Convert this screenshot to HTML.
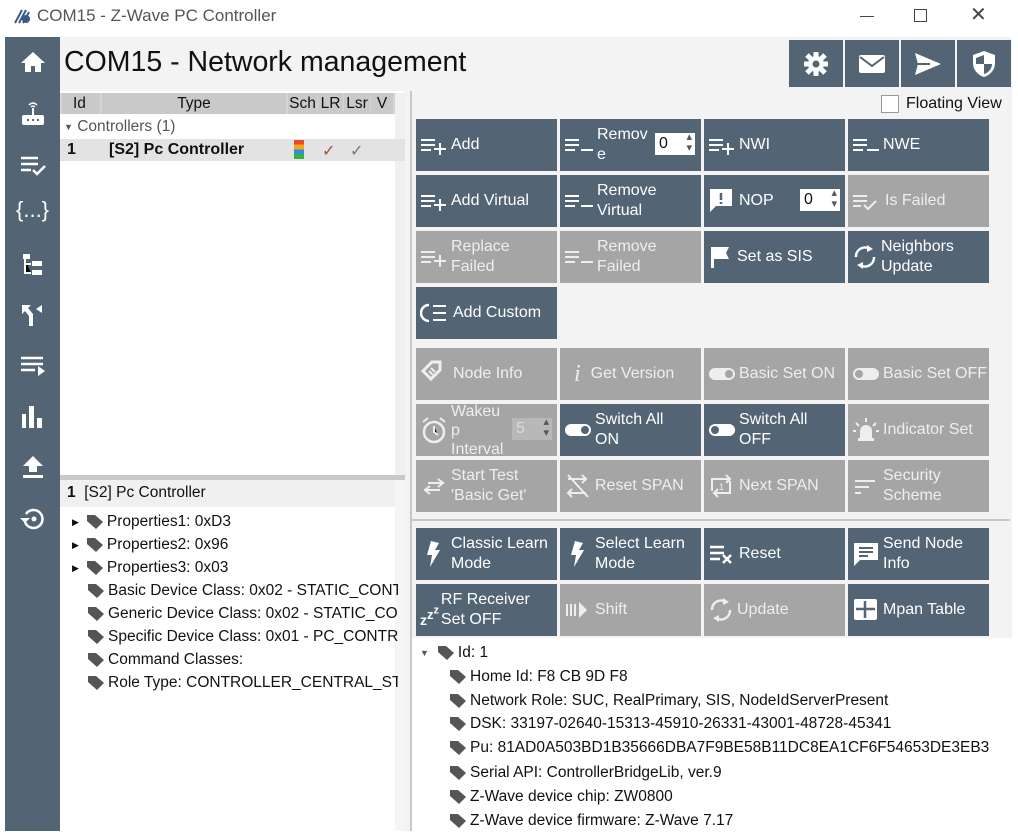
<!DOCTYPE html>
<html><head><meta charset="utf-8"><style>
*{margin:0;padding:0;box-sizing:border-box}
body{width:1018px;height:840px;background:#fff;font-family:"Liberation Sans",Arial,sans-serif;position:relative;overflow:hidden;color:#111}
.a{position:absolute}
.side{left:5px;top:37px;width:55px;height:794px;background:#536475}
.side svg{position:absolute;left:15px}
.main{left:60px;top:37px;width:952px;height:794px;background:#f3f3f3}
.btn{position:absolute;width:141px;height:52px;background:#536475;color:#fff;font-size:16px;display:flex;align-items:center;padding-left:4px;line-height:20px}
.btn.d{background:#a5a5a5;color:#eee}
.btn svg{flex:none;margin-right:3px}
.tb{position:absolute;top:40px;width:54px;height:47px;background:#536475}
.tb svg{position:absolute;left:13px;top:10px}
.spin{position:absolute;width:40px;height:22px;background:#fff;color:#111;font-size:16px;padding-left:4px;line-height:22px}
.spin:after{content:"▴\A▾";white-space:pre;position:absolute;right:3px;top:-1px;font-size:11px;line-height:11px;color:#555}
.tr{position:absolute;font-size:15.5px;white-space:nowrap;display:flex;align-items:center}
.tag{display:inline-block;width:16px;height:14px;margin-right:4px}
</style></head><body>
<svg class="a" style="left:14px;top:8px" width="18" height="16"><path d="M1 15 L8 2 M5 15 L12 2 M9 15 L15 4" stroke="#3a5a8a" stroke-width="2"/><circle cx="12" cy="11" r="4" fill="#3a5a8a"/></svg>
<div class="a" style="left:37px;top:6px;font-size:17px;color:#555">COM15 - Z-Wave PC Controller</div>
<div class="a" style="left:860px;top:16px;width:14px;height:1px;background:#444"></div>
<div class="a" style="left:914px;top:9px;width:13px;height:13px;border:1px solid #444"></div>
<div class="a" style="left:970px;top:2px;font-size:20px;color:#444;font-weight:300">✕</div>

<div class="a side">
<svg style="top:14px" width="26" height="22"><path d="M13 1 L1 12 H5 V21 H11 V15 H15 V21 H21 V12 H25Z" fill="#fff"/></svg>
<svg style="top:62px" width="26" height="28"><path d="M9 6 Q13 2 17 6 M11 8 Q13 6 15 8" stroke="#fff" stroke-width="1.5" fill="none"/><rect x="12" y="9" width="2" height="8" fill="#fff"/><rect x="2" y="16" width="22" height="10" rx="2" fill="#fff"/><path d="M7 21h2M12 21h2M17 21h2" stroke="#536475" stroke-width="2"/></svg>
<svg style="top:117px" width="26" height="22"><path d="M1 4h17M1 10h17M1 16h10" stroke="#fff" stroke-width="2.5"/><path d="M13 16l4 4 8-8" stroke="#fff" stroke-width="2.5" fill="none"/></svg>
<div class="a" style="left:11px;top:160px;color:#fff;font-size:22px">{...}</div>
<svg style="top:216px" width="26" height="24"><rect x="3" y="1" width="7" height="5" fill="#fff"/><path d="M5 6v14h6M5 11h6" stroke="#fff" stroke-width="2"/><rect x="12" y="8" width="10" height="5" fill="#fff"/><rect x="12" y="17" width="10" height="5" fill="#fff"/></svg>
<svg style="top:266px" width="26" height="24"><path d="M2 2h9l-3 3 5 6v12h-4V13L5 8 2 11Z" fill="#fff"/><path d="M16 6l6-4v8z" fill="#fff"/></svg>
<svg style="top:318px" width="26" height="22"><path d="M1 3h22M1 9h22M1 15h14" stroke="#fff" stroke-width="2.5"/><path d="M18 11l7 5-7 5z" fill="#fff"/></svg>
<svg style="top:368px" width="26" height="24"><rect x="2" y="9" width="4" height="14" fill="#fff"/><rect x="9" y="1" width="5" height="22" fill="#fff"/><rect x="17" y="13" width="5" height="10" fill="#fff"/></svg>
<svg style="top:418px" width="26" height="24"><path d="M13 1 L3 11 H9 V17 H17 V11 H23Z" fill="#fff"/><rect x="3" y="20" width="20" height="3" fill="#fff"/></svg>
<svg style="top:469px" width="26" height="26"><path d="M6 8 A9 9 0 1 1 5 16" stroke="#fff" stroke-width="2.5" fill="none"/><path d="M0 12h10L5 17z" fill="#fff"/><circle cx="14" cy="13" r="2.5" fill="#fff"/></svg>
</div>

<div class="a main"></div>
<div class="a" style="left:64px;top:46px;font-size:28.5px;color:#111">COM15 - Network management</div>

<div class="tb" style="left:789px"><svg width="28" height="28"><circle cx="14" cy="14" r="8" fill="#fff"/><path d="M14 2v24M2 14h24M5 5l18 18M23 5L5 23" stroke="#fff" stroke-width="5"/><circle cx="14" cy="14" r="3.5" fill="#536475"/></svg></div>
<div class="tb" style="left:845px"><svg width="28" height="28"><rect x="1" y="5" width="26" height="18" rx="2" fill="#fff"/><path d="M2 7l12 9 12-9" stroke="#536475" stroke-width="2" fill="none"/></svg></div>
<div class="tb" style="left:901px"><svg width="28" height="28"><path d="M1 3l26 11L1 25l3-11z" fill="#fff"/><path d="M4 14h12" stroke="#536475" stroke-width="2"/></svg></div>
<div class="tb" style="left:957px"><svg width="28" height="28"><path d="M14 1l11 4v8c0 7-5 12-11 14C8 25 3 20 3 13V5z" fill="#fff"/><path d="M14 5v9h8c0 5-4 9-8 10zM14 14H6V8l8-3z" fill="#536475"/></svg></div>

<div class="a" style="left:60px;top:91px;width:345px;height:386px;background:#fff"></div>
<div class="a" style="left:60px;top:93px;width:335px;height:21px;background:#d4d4d4"></div>
<div class="a" style="left:395px;top:93px;width:10px;height:384px;background:#f0f0f0"></div>
<div class="a" style="left:62px;top:93px;width:38px;height:21px;background:#c9c9c9;font-size:15.5px;padding-left:11px;line-height:22px">Id</div>
<div class="a" style="left:102px;top:93px;width:184px;height:21px;background:#c9c9c9;font-size:15.5px;text-align:center;line-height:22px">Type</div>
<div class="a" style="left:288px;top:93px;width:29px;height:21px;background:#c9c9c9;font-size:15.5px;text-align:center;line-height:22px">Sch</div>
<div class="a" style="left:318px;top:93px;width:25px;height:21px;background:#c9c9c9;font-size:15.5px;text-align:center;line-height:22px">LR</div>
<div class="a" style="left:344px;top:93px;width:26px;height:21px;background:#c9c9c9;font-size:15.5px;text-align:center;line-height:22px">Lsr</div>
<div class="a" style="left:371px;top:93px;width:22px;height:21px;background:#c9c9c9;font-size:15.5px;text-align:center;line-height:22px">V</div>
<div class="a" style="left:64px;top:118px;font-size:15.5px;color:#555"><span style="font-size:9px;vertical-align:middle">▼</span> Controllers (1)</div>
<div class="a" style="left:60px;top:139px;width:345px;height:22px;background:#e3e3e3"></div>
<div class="a" style="left:67px;top:141px;font-size:16px;font-weight:bold">1</div>
<div class="a" style="left:109px;top:141px;font-size:16px;font-weight:bold">[S2] Pc Controller</div>
<div class="a" style="left:294px;top:140px;width:10px;height:19px;background:linear-gradient(#e84a2c 0 25%,#f2a81c 25% 50%,#2f8ee0 50% 75%,#37b046 75%)"></div>
<div class="a" style="left:322px;top:141px;color:#a0522d;font-size:16px">✓</div>
<div class="a" style="left:350px;top:141px;color:#777;font-size:16px">✓</div>

<div class="a" style="left:60px;top:475px;width:345px;height:5px;background:#c8c8c8"></div>
<div class="a" style="left:60px;top:480px;width:345px;height:351px;background:#fff"></div>
<div class="a" style="left:60px;top:480px;width:345px;height:27px;background:#f0f0f0"></div>
<div class="a" style="left:67px;top:484px;font-size:15.5px"><b>1</b>&nbsp; [S2] Pc Controller</div>
<div class="a" style="left:395px;top:480px;width:10px;height:351px;background:#f5f5f5"></div>
<div class="a" style="left:60px;top:513px;width:338px;height:190px;overflow:hidden">
<div class="tr" style="left:12px;top:0"><span style="font-size:9px;margin-right:8px">▶</span><svg class="tag" viewBox="0 0 16 14"><path d="M0 0h8l8 7-7 7-9-8z" fill="#555"/></svg>Properties1: 0xD3</div>
<div class="tr" style="left:12px;top:23px"><span style="font-size:9px;margin-right:8px">▶</span><svg class="tag" viewBox="0 0 16 14"><path d="M0 0h8l8 7-7 7-9-8z" fill="#555"/></svg>Properties2: 0x96</div>
<div class="tr" style="left:12px;top:46px"><span style="font-size:9px;margin-right:8px">▶</span><svg class="tag" viewBox="0 0 16 14"><path d="M0 0h8l8 7-7 7-9-8z" fill="#555"/></svg>Properties3: 0x03</div>
<div class="tr" style="left:28px;top:69px"><svg class="tag" viewBox="0 0 16 14"><path d="M0 0h8l8 7-7 7-9-8z" fill="#555"/></svg>Basic Device Class: 0x02 - STATIC_CONTROLLER</div>
<div class="tr" style="left:28px;top:92px"><svg class="tag" viewBox="0 0 16 14"><path d="M0 0h8l8 7-7 7-9-8z" fill="#555"/></svg>Generic Device Class: 0x02 - STATIC_CONTROLLER</div>
<div class="tr" style="left:28px;top:115px"><svg class="tag" viewBox="0 0 16 14"><path d="M0 0h8l8 7-7 7-9-8z" fill="#555"/></svg>Specific Device Class: 0x01 - PC_CONTROLLER</div>
<div class="tr" style="left:28px;top:138px"><svg class="tag" viewBox="0 0 16 14"><path d="M0 0h8l8 7-7 7-9-8z" fill="#555"/></svg>Command Classes:</div>
<div class="tr" style="left:28px;top:161px"><svg class="tag" viewBox="0 0 16 14"><path d="M0 0h8l8 7-7 7-9-8z" fill="#555"/></svg>Role Type: CONTROLLER_CENTRAL_STATIC</div>
</div>

<div class="a" style="left:410px;top:91px;width:2px;height:740px;background:#c8c8c8"></div>

<div class="a" style="left:881px;top:95px;width:18px;height:18px;border:1px solid #999;background:#fff"></div>
<div class="a" style="left:906px;top:95px;font-size:16px">Floating View</div>

<div class="btn" style="left:416px;top:119px"><svg width="28" height="20"><path d="M1 5h14M1 10h14M1 15h10" stroke="#fff" stroke-width="2"/><path d="M20 8v12M14 14h12" stroke="#fff" stroke-width="2"/></svg>Add</div>
<div class="btn" style="left:560px;top:119px"><svg width="30" height="20"><path d="M1 5h14M1 10h14M1 15h10M17 15h12" stroke="#fff" stroke-width="2"/></svg><span>Remov<br>e</span></div>
<div class="spin" style="left:655px;top:133px">0</div>
<div class="btn" style="left:704px;top:119px"><svg width="28" height="20"><path d="M1 5h14M1 10h14M1 15h10" stroke="#fff" stroke-width="2"/><path d="M20 8v12M14 14h12" stroke="#fff" stroke-width="2"/></svg>NWI</div>
<div class="btn" style="left:848px;top:119px"><svg width="28" height="20"><path d="M1 5h14M1 10h14M1 15h10M15 15h12" stroke="#fff" stroke-width="2"/></svg>NWE</div>

<div class="btn" style="left:416px;top:175px"><svg width="28" height="20"><path d="M1 5h14M1 10h14M1 15h10" stroke="#fff" stroke-width="2"/><path d="M20 8v12M14 14h12" stroke="#fff" stroke-width="2"/></svg>Add Virtual</div>
<div class="btn" style="left:560px;top:175px"><svg width="30" height="20"><path d="M1 5h14M1 10h14M1 15h10M17 15h12" stroke="#fff" stroke-width="2"/></svg><span>Remove<br>Virtual</span></div>
<div class="btn" style="left:704px;top:175px"><svg width="28" height="28"><path d="M2 2h22v17H8l-6 6z" fill="#fff"/><path d="M13 6v7M13 15v2" stroke="#536475" stroke-width="2.5"/></svg>NOP</div>
<div class="spin" style="left:800px;top:189px">0</div>
<div class="btn d" style="left:848px;top:175px"><svg width="30" height="20"><path d="M1 5h14M1 10h14M1 15h8" stroke="#eee" stroke-width="2"/><path d="M12 14l4 4 8-8" stroke="#eee" stroke-width="2" fill="none"/></svg>Is Failed</div>

<div class="btn d" style="left:416px;top:231px"><svg width="28" height="20"><path d="M1 5h14M1 10h14M1 15h10" stroke="#eee" stroke-width="2"/><path d="M20 8v12M14 14h12" stroke="#eee" stroke-width="2"/></svg><span>Replace<br>Failed</span></div>
<div class="btn d" style="left:560px;top:231px"><svg width="30" height="20"><path d="M1 5h14M1 10h14M1 15h10M17 15h12" stroke="#eee" stroke-width="2"/></svg><span>Remove<br>Failed</span></div>
<div class="btn" style="left:704px;top:231px"><svg width="26" height="26"><path d="M3 3h18l-3 6 3 6H6v9H3z" fill="#fff"/></svg>Set as SIS</div>
<div class="btn" style="left:848px;top:231px"><svg width="26" height="26"><path d="M18 5A9 9 0 0 0 4 13M8 21a9 9 0 0 0 14-8" stroke="#fff" stroke-width="2.5" fill="none"/><path d="M15 1l6 4-6 3zM11 25l-6-4 6-3z" fill="#fff"/></svg><span>Neighbors<br>Update</span></div>

<div class="btn" style="left:416px;top:287px"><svg width="30" height="22"><path d="M9 3A8 8 0 0 0 9 19" stroke="#fff" stroke-width="2.5" fill="none"/><path d="M13 4h13M13 11h13M13 18h13" stroke="#fff" stroke-width="2"/></svg>Add Custom</div>

<div class="btn d" style="left:416px;top:348px"><svg width="30" height="28"><path d="M3 11L12 2h8v8l-9 9z" fill="none" stroke="#eee" stroke-width="3"/><path d="M9 11l4 4M11 8l4 4" stroke="#eee" stroke-width="2"/></svg>Node Info</div>
<div class="btn d" style="left:560px;top:348px"><span style="font-family:'Liberation Serif',serif;font-style:italic;font-size:24px;margin:0 10px 0 10px">i</span>Get Version</div>
<div class="btn d" style="left:704px;top:348px"><svg width="28" height="16"><rect x="1" y="2" width="26" height="12" rx="6" fill="#eee"/><circle cx="21" cy="8" r="4" fill="#a5a5a5"/></svg>Basic Set ON</div>
<div class="btn d" style="left:848px;top:348px"><svg width="28" height="16"><rect x="1" y="2" width="26" height="12" rx="6" fill="#eee"/><circle cx="7" cy="8" r="4" fill="#a5a5a5"/></svg>Basic Set OFF</div>

<div class="btn d" style="left:416px;top:404px;overflow:hidden"><svg width="28" height="28"><circle cx="14" cy="16" r="10" stroke="#eee" stroke-width="2.5" fill="none"/><path d="M14 10v6l4 3M3 6l5-4M25 6l-5-4" stroke="#eee" stroke-width="2"/></svg><span style="line-height:19px">Wakeu<br>p<br>Interval</span></div>
<div class="spin" style="left:512px;top:418px;background:#b8b8b8;color:#ddd">5</div>
<div class="btn" style="left:560px;top:404px"><svg width="28" height="16"><rect x="1" y="2" width="26" height="12" rx="6" fill="#fff"/><circle cx="21" cy="8" r="4" fill="#536475"/></svg><span>Switch All<br>ON</span></div>
<div class="btn" style="left:704px;top:404px"><svg width="28" height="16"><rect x="1" y="2" width="26" height="12" rx="6" fill="#fff"/><circle cx="7" cy="8" r="4" fill="#536475"/></svg><span>Switch All<br>OFF</span></div>
<div class="btn d" style="left:848px;top:404px"><svg width="28" height="28"><path d="M8 22V15a6 6 0 0 1 12 0v7z" fill="#eee"/><rect x="6" y="22" width="16" height="3" fill="#eee"/><path d="M14 2v4M4 7l3 3M24 7l-3 3M1 15h3M24 15h3" stroke="#eee" stroke-width="2"/></svg>Indicator Set</div>

<div class="btn d" style="left:416px;top:460px"><svg width="28" height="22"><path d="M8 8h16M18 4l5 4-5 4M20 15H4M10 11l-5 4 5 4" stroke="#eee" stroke-width="2" fill="none"/></svg><span>Start Test<br>'Basic Get'</span></div>
<div class="btn d" style="left:560px;top:460px"><svg width="28" height="26"><path d="M4 6h18M4 20h18M18 2l4 4-4 4M8 16l-4 4 4 4M4 2l20 22" stroke="#eee" stroke-width="2" fill="none"/></svg>Reset SPAN</div>
<div class="btn d" style="left:704px;top:460px"><svg width="28" height="26"><path d="M4 18V6h18M18 2l4 4-4 4M22 8v12H6M10 16l-4 4 4 4" stroke="#eee" stroke-width="2" fill="none"/><text x="11" y="17" font-size="9" fill="#eee" font-family="Liberation Sans">1</text></svg>Next SPAN</div>
<div class="btn d" style="left:848px;top:460px"><svg width="28" height="22"><path d="M3 6h20M3 12h14M3 18h6" stroke="#eee" stroke-width="2"/></svg><span>Security<br>Scheme</span></div>

<div class="a" style="left:412px;top:519px;width:598px;height:2px;background:#c8c8c8"></div>

<div class="btn" style="left:416px;top:528px"><svg width="28" height="30"><path d="M11 2l8 2-4 7h5L10 28l2-12H7z" fill="#fff"/></svg><span>Classic Learn<br>Mode</span></div>
<div class="btn" style="left:560px;top:528px"><svg width="28" height="30"><path d="M11 2l8 2-4 7h5L10 28l2-12H7z" fill="#fff"/></svg><span>Select Learn<br>Mode</span></div>
<div class="btn" style="left:704px;top:528px"><svg width="28" height="22"><path d="M2 4h14M2 10h14M2 16h10M15 12l8 8M23 12l-8 8" stroke="#fff" stroke-width="2.5"/></svg>Reset</div>
<div class="btn" style="left:848px;top:528px"><svg width="28" height="28"><path d="M2 3h24v17H8l-6 6z" fill="#fff"/><path d="M7 8h14M7 12h14M7 16h9" stroke="#536475" stroke-width="2"/></svg><span>Send Node<br>Info</span></div>

<div class="btn" style="left:416px;top:584px"><span style="font-weight:bold;font-size:14px;margin-right:2px;position:relative;top:5px">z<sup style="font-size:13px">z<sup>z</sup></sup></span><span>RF Receiver<br>Set OFF</span></div>
<div class="btn d" style="left:560px;top:584px"><svg width="28" height="20"><path d="M3 4v12M7 4v12M11 4v12" stroke="#eee" stroke-width="2"/><path d="M15 2l8 8-8 8z" fill="#eee"/></svg>Shift</div>
<div class="btn d" style="left:704px;top:584px"><svg width="26" height="26"><path d="M18 5A9 9 0 0 0 4 13M8 21a9 9 0 0 0 14-8" stroke="#eee" stroke-width="2.5" fill="none"/><path d="M15 1l6 4-6 3zM11 25l-6-4 6-3z" fill="#eee"/></svg>Update</div>
<div class="btn" style="left:848px;top:584px"><svg width="28" height="26"><rect x="2" y="2" width="23" height="21" rx="2" fill="#fff"/><path d="M4 12h19M13 4v17" stroke="#536475" stroke-width="2.5"/></svg>Mpan Table</div>

<div class="a" style="left:412px;top:638px;width:606px;height:193px;background:#fff"></div>
<div class="a" style="left:412px;top:642px;width:606px;height:189px;overflow:hidden">
<div class="tr" style="left:8px;top:2px"><span style="font-size:9px;margin-right:9px;color:#555">▼</span><svg class="tag" viewBox="0 0 16 14"><path d="M0 0h8l8 7-7 7-9-8z" fill="#555"/></svg>Id: 1</div>
<div class="tr" style="left:38px;top:26px"><svg class="tag" viewBox="0 0 16 14"><path d="M0 0h8l8 7-7 7-9-8z" fill="#555"/></svg>Home Id: F8 CB 9D F8</div>
<div class="tr" style="left:38px;top:50px"><svg class="tag" viewBox="0 0 16 14"><path d="M0 0h8l8 7-7 7-9-8z" fill="#555"/></svg>Network Role: SUC, RealPrimary, SIS, NodeIdServerPresent</div>
<div class="tr" style="left:38px;top:73px"><svg class="tag" viewBox="0 0 16 14"><path d="M0 0h8l8 7-7 7-9-8z" fill="#555"/></svg>DSK: 33197-02640-15313-45910-26331-43001-48728-45341</div>
<div class="tr" style="left:38px;top:97px"><svg class="tag" viewBox="0 0 16 14"><path d="M0 0h8l8 7-7 7-9-8z" fill="#555"/></svg>Pu: 81AD0A503BD1B35666DBA7F9BE58B11DC8EA1CF6F54653DE3EB3</div>
<div class="tr" style="left:38px;top:122px"><svg class="tag" viewBox="0 0 16 14"><path d="M0 0h8l8 7-7 7-9-8z" fill="#555"/></svg>Serial API: ControllerBridgeLib, ver.9</div>
<div class="tr" style="left:38px;top:146px"><svg class="tag" viewBox="0 0 16 14"><path d="M0 0h8l8 7-7 7-9-8z" fill="#555"/></svg>Z-Wave device chip: ZW0800</div>
<div class="tr" style="left:38px;top:170px"><svg class="tag" viewBox="0 0 16 14"><path d="M0 0h8l8 7-7 7-9-8z" fill="#555"/></svg>Z-Wave device firmware: Z-Wave 7.17</div>
</div>
</body></html>
